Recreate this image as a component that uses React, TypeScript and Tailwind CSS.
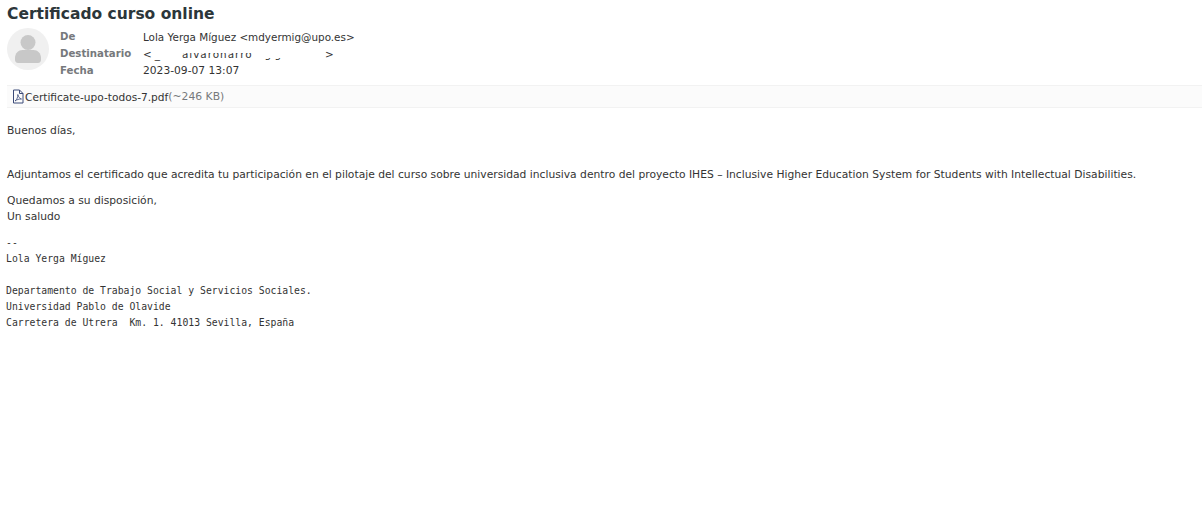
export default function App() {
  const rows = [
    ["De", "Lola Yerga Míguez <mdyermig@upo.es>"],
    ["Destinatario", ""],
    ["Fecha", "2023-09-07 13:07"],
  ];
  return (
    <div className="min-h-[526px] bg-white text-[#333] font-['DejaVu_Sans','Liberation_Sans',sans-serif] text-[10.735px] leading-[16px]">
      <div className="pl-[7px] pt-[5px]">
        <h1 className="text-[15.5px] leading-[19px] font-bold text-[#2c363a]">Certificado curso online</h1>
        <div className="flex mt-[4px] h-[42px]">
          <div className="w-[42px] h-[42px] rounded-full bg-[#f0f0f0] flex items-center justify-center shrink-0">
            <svg width="28" height="30" viewBox="0 0 28 30" className="text-[#c8c8c8]" fill="currentColor">
              <circle cx="14" cy="8.500" r="7.500" />
              <path d="M1 24c0-5 3.500-8 7.500-8h11c4 0 7.500 3 7.500 8v2c0 1.500-1 3-3 3H4c-2 0-3-1.500-3-3z" />
            </svg>
          </div>
          <div className="ml-[11px] flex flex-col">
            {rows.map(([label, value]) => (
              <div key={label} className="flex h-[17px] shrink-0 items-center">
                <span className="w-[83px] font-bold text-[#76797c] text-[10.2px]">{label}</span>
                {label === "Destinatario" ? (
                  <span className="relative flex text-[10.4px] w-[190px] whitespace-pre">
                    <span>{"<"}</span>
                    <span className="ml-[3px]">_</span>
                    <span className="ml-[22px] tracking-[1px]">alvaroharro</span>
                    <span className="ml-[12px]">g g</span>
                    <span className="ml-[44px]">{">"}</span>
                    <span className="absolute left-[10px] top-0 w-[172px] h-[7px] bg-white" />
                    <span className="absolute left-[118px] top-0 w-[20px] h-[12px] bg-white" />
                  </span>
                ) : (
                  <span className={label === "Fecha" ? "text-[10.7px]" : "text-[10.4px]"}>{value}</span>
                )}
              </div>
            ))}
          </div>
        </div>
      </div>
      <div className="ml-[7px] mt-[15px] h-[23px] bg-[#fbfbfb] border-y border-[#f2f2f2] flex items-center pl-[5px]">
        <svg width="12" height="15" viewBox="0 0 12 15" fill="none" stroke="#3b4a78" strokeWidth="1" className="shrink-0">
          <path d="M1.500 1h6l3.500 3.500V14h-9.500z" />
          <path d="M7.500 1v3.500H11" />
          <path d="M3 12c2-1.500 3-4 2.800-6.500C6.500 8 7.500 9.500 9.500 10 7 10 5 10.500 3 12z" strokeWidth="0.8" />
        </svg>
        <span className="ml-[1px] text-[10.6px]">Certificate-upo-todos-7.pdf</span>
        <span className="text-[#76797c] text-[10.8px]">(~246 KB)</span>
      </div>
      <div className="pl-[7px] pt-[15px] text-[#333]">
        <p>Buenos días,</p>
        <p className="mt-[28px]">Adjuntamos el certificado que acredita tu participación en el pilotaje del curso sobre universidad inclusiva dentro del proyecto IHES – Inclusive Higher Education System for Students with Intellectual Disabilities.</p>
        <p className="mt-[10px]">Quedamos a su disposición,<br />Un saludo</p>
        <pre className="mt-[10px] -ml-[1px] font-['DejaVu_Sans_Mono','Liberation_Mono',monospace] text-[9.77px] leading-[16px]">{`--
Lola Yerga Míguez

Departamento de Trabajo Social y Servicios Sociales.
Universidad Pablo de Olavide
Carretera de Utrera  Km. 1. 41013 Sevilla, España`}</pre>
      </div>
    </div>
  );
}
